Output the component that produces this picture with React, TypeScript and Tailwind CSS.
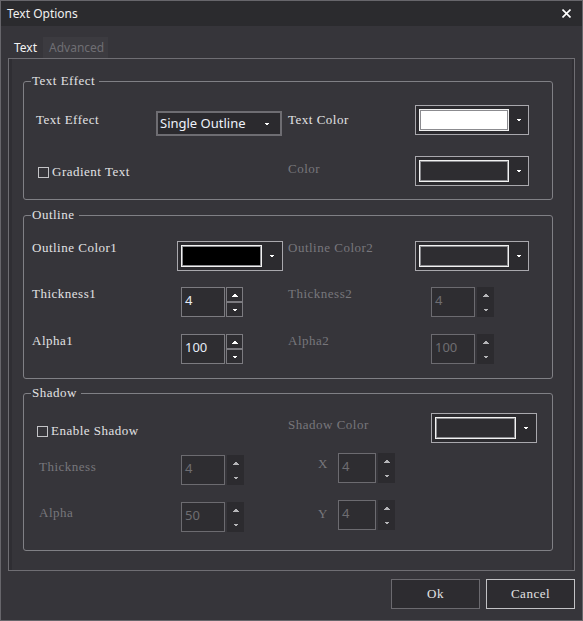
import React from "react";

const label = "font-['Liberation_Serif',serif] text-[13px] leading-[12px] tracking-[0.5px] whitespace-nowrap";
const on = "text-[#e2e2e4]";
const off = "text-[#78777c]";

function Tri({ up = false, className = "" }: { up?: boolean; className?: string }) {
  return (
    <svg width="6" height="4" viewBox="0 0 6 4" className={className} shapeRendering="crispEdges">
      <path d={up ? "M0 4 L3 0.5 L6 4 Z" : "M0 0.5 L6 0.5 L3 4 Z"} fill="currentColor" />
    </svg>
  );
}

function ColorCombo({
  box,
  swatch,
  fill,
}: {
  box: string;
  swatch: string;
  fill: string;
}) {
  return (
    <div className={`flex h-[30px] shrink-0 border border-[#a9a8ad] bg-[#2c2b2f] py-[3px] pl-[3px] ${box}`}>
      <div className={`h-[22px] border border-[#f2f2f2] ${swatch}`}>
        <div className={`h-full w-full border border-[#8b8b8f] ${fill}`} />
      </div>
      <div className="flex flex-1 items-center justify-center text-white">
        <Tri />
      </div>
    </div>
  );
}

function Spin({
  value,
  disabled = false,
  box = "w-[44px]",
}: {
  value: string;
  disabled?: boolean;
  box?: string;
}) {
  return (
    <div className={`flex h-[30px] shrink-0 ${disabled ? "gap-[2px]" : "gap-[1px]"}`}>
      <div
        className={`flex h-[30px] items-center border bg-[#2e2d31] pb-[2px] pl-[3px] font-['Noto_Sans',sans-serif] text-[13px] ${box} ${
          disabled ? "border-[#6c6b70] text-[#6e6d72]" : "border-[#7c7b80] text-[#e6ecf6]"
        }`}
      >
        {value}
      </div>
      {disabled ? (
        <div className="flex h-[30px] w-[17px] flex-col items-center justify-around bg-[#2c2b2f] text-[#b5b5b8]">
          <Tri up />
          <Tri />
        </div>
      ) : (
        <div className="flex w-[17px] flex-col text-white">
          <div className="flex h-[15px] items-center justify-center border border-[#7c7b80] bg-[#2e2d31]">
            <Tri up />
          </div>
          <div className="flex h-[15px] items-center justify-center border border-[#7c7b80] bg-[#2e2d31]">
            <Tri />
          </div>
        </div>
      )}
    </div>
  );
}

function Check({ text }: { text: string }) {
  return (
    <div className="flex items-center gap-[3px]">
      <div className="h-[11px] w-[11px] border border-[#c4c4c7]" />
      <span className={`${label} ${on}`}>{text}</span>
    </div>
  );
}

function Group({ title, children, className = "" }: { title: string; children: React.ReactNode; className?: string }) {
  return (
    <fieldset className={`w-[530px] rounded-[3px] border border-[#808085] ${className}`}>
      <legend className={`ml-[7px] h-[12px] pl-[1px] pr-[4px] ${label} ${on}`}>{title}</legend>
      {children}
    </fieldset>
  );
}

export default function App() {
  return (
    <div className="flex h-[621px] w-[583px] flex-col border border-[#67666b] bg-[#36353a] font-['Noto_Sans',sans-serif]">
      <div className="flex h-[25px] shrink-0 items-center justify-between bg-[#2b2b2e] pl-[6px] pr-[11px]">
        <span className="text-[12px] leading-none text-[#f0f0f0]">Text Options</span>
        <svg width="9" height="9" viewBox="0 0 9 9">
          <path d="M0.5 0.5 L8.5 8.5 M8.5 0.5 L0.5 8.5" stroke="#ffffff" strokeWidth="1.6" />
        </svg>
      </div>

      <div className="ml-[7px] mt-[11px] flex h-[21px]">
        <div className="flex w-[35px] items-center pl-[6px] text-[12px] text-[#f2f2f2]">Text</div>
        <div className="flex w-[65px] items-center bg-[#3c3b40] pl-[6px] text-[12px] text-[#6f6e73]">Advanced</div>
      </div>

      <div className="ml-[7px] h-[513px] w-[567px] border border-[#6f6e73]">
        <div className="flex h-full flex-col border-l-[3px] border-r-[2px] border-[#2f2e33] pl-[11px]">
          <Group title="Text Effect" className="mt-[16px] pb-[13px] pt-[18px]">
            <div className="flex h-[30px] items-start">
              <div className="flex w-[264px] items-start">
                <span className={`ml-[12px] mt-[9px] w-[120px] ${label} ${on}`}>Text Effect</span>
                <div className="mt-[6px] flex h-[25px] w-[126px] items-center justify-between border-2 border-[#6e6d72] bg-[#2b2a2e] pl-[2px] pr-[10px]">
                  <span className="pb-[1px] text-[13px] leading-none text-[#eef2fa]">Single Outline</span>
                  <Tri className="text-white" />
                </div>
              </div>
              <span className={`mt-[9px] w-[127px] ${label} ${on}`}>Text Color</span>
              <ColorCombo box="w-[114px]" swatch="w-[90px]" fill="bg-white" />
            </div>
            <div className="mt-[21px] flex h-[30px] items-start">
              <div className="ml-[14px] mt-[10px] w-[250px]">
                <Check text="Gradient Text" />
              </div>
              <span className={`mt-[7px] w-[127px] ${label} ${off}`}>Color</span>
              <ColorCombo box="w-[114px]" swatch="w-[90px]" fill="bg-[#2e2d31]" />
            </div>
          </Group>

          <Group title="Outline" className="mt-[9px] pb-[14px] pt-[20px]">
            <div className="flex h-[30px] items-start">
              <div className="flex w-[264px] items-start">
                <span className={`ml-[8px] mt-[1px] w-[145px] ${label} ${on}`}>Outline Color1</span>
                <ColorCombo box="w-[106px]" swatch="w-[81px]" fill="bg-black" />
              </div>
              <span className={`mt-[1px] w-[127px] ${label} ${off}`}>Outline Color2</span>
              <ColorCombo box="w-[114px]" swatch="w-[90px]" fill="bg-[#2e2d31]" />
            </div>
            <div className="mt-[16px] flex h-[30px] items-start">
              <div className="flex w-[264px] items-start">
                <span className={`ml-[8px] mt-[1px] w-[149px] ${label} ${on}`}>Thickness1</span>
                <Spin value="4" />
              </div>
              <span className={`mt-[1px] w-[143px] ${label} ${off}`}>Thickness2</span>
              <Spin value="4" disabled />
            </div>
            <div className="mt-[17px] flex h-[30px] items-start">
              <div className="flex w-[264px] items-start">
                <span className={`ml-[8px] mt-[1px] w-[149px] ${label} ${on}`}>Alpha1</span>
                <Spin value="100" />
              </div>
              <span className={`mt-[1px] w-[143px] ${label} ${off}`}>Alpha2</span>
              <Spin value="100" disabled />
            </div>
          </Group>

          <Group title="Shadow" className="mt-[8px] pb-[18px] pt-[14px]">
            <div className="flex h-[30px] items-start">
              <div className="ml-[13px] mt-[12px] w-[251px]">
                <Check text="Enable Shadow" />
              </div>
              <span className={`mt-[6px] w-[143px] ${label} ${off}`}>Shadow Color</span>
              <ColorCombo box="w-[106px]" swatch="w-[81px]" fill="bg-[#2e2d31]" />
            </div>
            <div className="mt-[10px] flex h-[32px] items-start">
              <div className="flex w-[264px] items-start">
                <span className={`ml-[15px] mt-[8px] w-[142px] ${label} ${off}`}>Thickness</span>
                <div className="mt-[2px]">
                  <Spin value="4" disabled />
                </div>
              </div>
              <span className={`ml-[30px] mt-[5px] w-[20px] ${label} ${off}`}>X</span>
              <Spin value="4" disabled box="w-[38px]" />
            </div>
            <div className="mt-[15px] flex h-[32px] items-start">
              <div className="flex w-[264px] items-start">
                <span className={`ml-[15px] mt-[7px] w-[142px] ${label} ${off}`}>Alpha</span>
                <div className="mt-[2px]">
                  <Spin value="50" disabled />
                </div>
              </div>
              <span className={`ml-[30px] mt-[8px] w-[20px] ${label} ${off}`}>Y</span>
              <Spin value="4" disabled box="w-[38px]" />
            </div>
          </Group>
        </div>
      </div>

      <div className="mt-[8px] flex justify-end gap-[6px] pr-[7px]">
        <button className={`flex h-[30px] w-[89px] items-center justify-center border border-[#6b6a6f] bg-[#2d2c30] ${label} ${on}`}>
          Ok
        </button>
        <button className={`flex h-[30px] w-[89px] items-center justify-center border border-[#c2c2c5] bg-[#2d2c30] ${label} ${on}`}>
          Cancel
        </button>
      </div>
    </div>
  );
}
